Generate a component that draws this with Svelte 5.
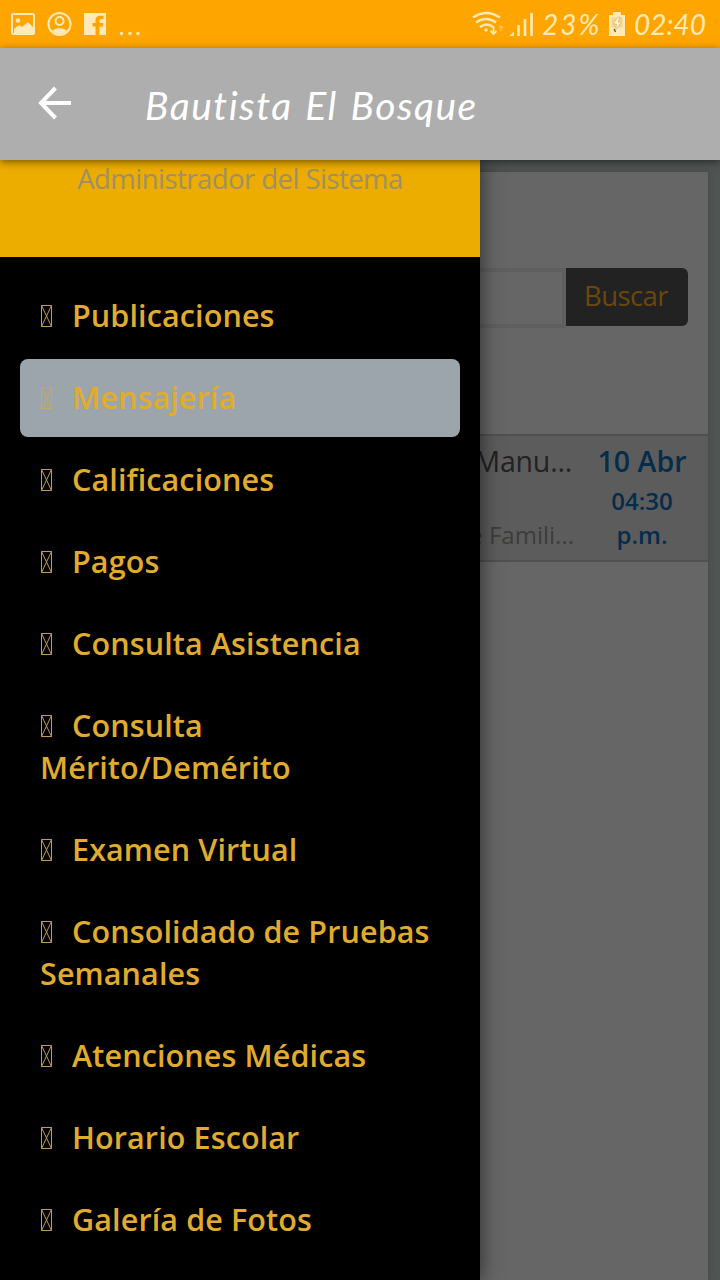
<script>
  const items = [
    ['Publicaciones'],
    ['Mensajería'],
    ['Calificaciones'],
    ['Pagos'],
    ['Consulta Asistencia'],
    ['Consulta', 'Mérito/Demérito'],
    ['Examen Virtual'],
    ['Consolidado de Pruebas', 'Semanales'],
    ['Atenciones Médicas'],
    ['Horario Escolar'],
    ['Galería de Fotos']
  ];
  const active = 1;
</script>

<div class="screen">
  <div class="status">
    <svg class="left" width="150" height="48" viewBox="0 0 150 48" fill="none" stroke="#ffe9b8" stroke-width="2">
      <rect x="12" y="14" width="22" height="20" rx="1" />
      <circle cx="18" cy="20.500" r="2.300" fill="#ffe9b8" stroke="none" />
      <path d="M14 29l5-4 3 2 6-5 5 5v6H14z" fill="#ffe9b8" stroke="none" />
      <circle cx="59.500" cy="24" r="11" />
      <circle cx="59.500" cy="21" r="4" />
      <path d="M52 30.500q7.500-5 15 0q-3 3.500-7.500 3.500T52 30.500z" fill="#ffe9b8" stroke="none" />
      <path d="M84 13h22v22h-6.500v-8.500h3.300l.5-3.500h-3.800v-2q0-2 2-2h2v-3.200h-3.500q-4.500 0-4.500 4.500V23h-3v3.500h3V35H84z" fill="#ffe9b8" stroke="none" />
      <g fill="#ffe9b8" stroke="none"><circle cx="121.500" cy="33.500" r="1.700" /><circle cx="130" cy="33.500" r="1.700" /><circle cx="138" cy="33.500" r="1.700" /></g>
    </svg>
    <div class="right">
      <svg width="66" height="48" viewBox="470 0 66 48" fill="none" stroke="#ffe9b8" stroke-width="2.400">
        <path d="M473 17.500q13-9 27 0" />
        <path d="M476 22.500q10-7 20 0" />
        <path d="M480 27q7-5 13 0" />
        <circle cx="486" cy="30" r="1.700" fill="#ffe9b8" stroke="none" />
        <path d="M493.500 26.500v7M490.500 31l3 3 3-3" stroke-width="1.800" />
        <path d="M501 31v-5M498.800 28l2.200-2.200 2.200 2.200" stroke="#ffc55c" stroke-width="1.300" />
        <path d="M509 36l5-4.500V36z" fill="#ffe9b8" stroke="none" />
        <path d="M518.500 36v-11M525 36V19M531.500 36V13" stroke-width="2.600" />
      </svg>
      <span class="pct">23%</span>
      <svg width="18" height="48" viewBox="608 0 18 48">
        <path d="M609 15h4v-3h8v3h4v21h-16z" fill="#ffe9b8" />
        <path d="M611.500 17.500h11v10h-11z" fill="#f8d48a" />
        <path d="M618 17l-5 7h3.500l-1 6 6-8H618l2-5z" fill="#fff5da" stroke="#d9b76e" stroke-width=".8" />
        <path d="M614 29l1.500 3" stroke="#5b4a28" stroke-width="1.300" />
      </svg>
      <span class="time">02:40</span>
    </div>
  </div>

  <header>
    <svg width="34" height="34" viewBox="0 0 34 34" fill="none" stroke="#fff" stroke-width="4"><path d="M33 17H4M17.500 2L3 17l14.500 15" /></svg>
    <h1>Bautista El Bosque</h1>
  </header>

  <main>
    <section class="card">
      <div class="search">
        <div class="input"></div>
        <button>Buscar</button>
      </div>
      <div class="row">
        <div class="message">
          <div class="name">Manu...</div>
          <div class="sub">e Famili...</div>
        </div>
        <div class="when">
          <div class="date">10 Abr</div>
          <div class="hour">04:30<br />p.m.</div>
        </div>
      </div>
    </section>

    <aside>
      <div class="role">Administrador del Sistema</div>
      <nav>
        {#each items as lines, i}
          <div class="item" class:active={i === active}>
            <svg width="13" height="24" viewBox="0 0 13 24" fill="none" stroke="currentColor" stroke-width="1"><path d="M1.500 1.500h10v21h-10zM1.500 1.500l10 21M11.500 1.500l-10 21" /></svg><span>{lines[0]}</span>{#if lines[1]}<br />{lines[1]}{/if}
          </div>
        {/each}
      </nav>
    </aside>
  </main>
</div>

<style>
  :global(body) { margin: 0; overflow: hidden; }
  .screen {
    width: 720px; height: 1280px; overflow: hidden;
    display: flex; flex-direction: column;
    font-family: "Open Sans", "Noto Sans", sans-serif;
  }
  .status {
    height: 48px; flex: none; display: flex; justify-content: space-between;
    background: #ffa500; color: #ffe9b8;
  }
  .right { display: flex; width: 250px; align-items: center; }
  .right span {
    font: italic 28px/48px "Lato", sans-serif; height: 48px; white-space: nowrap;
  }
  .right svg { flex: none; }
  .pct { width: 66px; margin-left: 6px; letter-spacing: 2px; }
  .time { margin-left: 8px; letter-spacing: 0; }
  header {
    height: 112px; flex: none; box-sizing: border-box; padding-left: 38px;
    display: flex; align-items: center; position: relative; z-index: 3;
    background: #aeaeae; box-shadow: 0 2px 8px rgba(0, 0, 0, .5);
  }
  header svg { margin-bottom: 2px; }
  h1 {
    margin: 2px 0 0 73px; color: #fff; white-space: nowrap;
    font: italic 400 39px/50px "Lato", sans-serif; letter-spacing: 1.5px; word-spacing: 2px;
  }
  main {
    flex: 1; min-height: 0; position: relative; box-sizing: border-box;
    padding: 12px 12px 0; display: flex; background: #505453;
  }
  .card { flex: 1; background: #666; box-shadow: 0 0 5px #434746; }
  .search { display: flex; padding: 96px 20px 0; height: 60px; }
  .input { flex: 1; border: 4px solid #5f5f5f; box-sizing: border-box; height: 60px; }
  button {
    width: 122px; height: 58px; border: 0; padding: 0 2px 2px 0; border-radius: 0 6px 6px 0;
    background: #222; color: #69490b; font: 27.500px/56px "Open Sans", sans-serif; letter-spacing: -.6px;
  }
  .row {
    margin-top: 106px; height: 124px; display: flex; justify-content: flex-end;
    background: #5c5c5c; border: solid #505050; border-width: 2px 0;
  }
  .message { text-align: right; padding-top: 5px; margin-right: 22px; }
  .name { font-size: 28.500px; line-height: 40px; color: #222; padding-right: 2px; letter-spacing: -.2px; }
  .sub { font-size: 24px; line-height: 34px; margin-top: 37px; color: #3d3d3d; }
  .when { width: 92px; margin-right: 20px; padding-top: 5px; text-align: center; color: #052c4b; font-weight: 600; white-space: nowrap; }
  .date { font-size: 28.500px; line-height: 40px; }
  .hour { font-size: 24px; line-height: 34px; margin-top: 3px; }
  aside {
    position: absolute; left: 0; top: 0; bottom: 0; width: 480px;
    background: #000; box-shadow: 2px 0 18px rgba(0, 0, 0, .5); overflow: hidden;
  }
  .role {
    height: 97px; background: #ecac00; color: #a09064;
    font-size: 27.500px; line-height: 38px; text-align: center; letter-spacing: -.54px;
  }
  nav { padding: 20px; display: flex; flex-direction: column; gap: 4px; }
  .item {
    padding: 17px 0 19px 20px; border-radius: 8px; white-space: nowrap;
    color: #e1ab2e; font-size: 30.500px; line-height: 42px; font-weight: 600; letter-spacing: .12px;
  }
  .item svg { vertical-align: -1px; margin-right: 19px; color: #c79a50; }
  .active { background: #9ca5ac; }
  .active svg { color: #d0a848; }
</style>
